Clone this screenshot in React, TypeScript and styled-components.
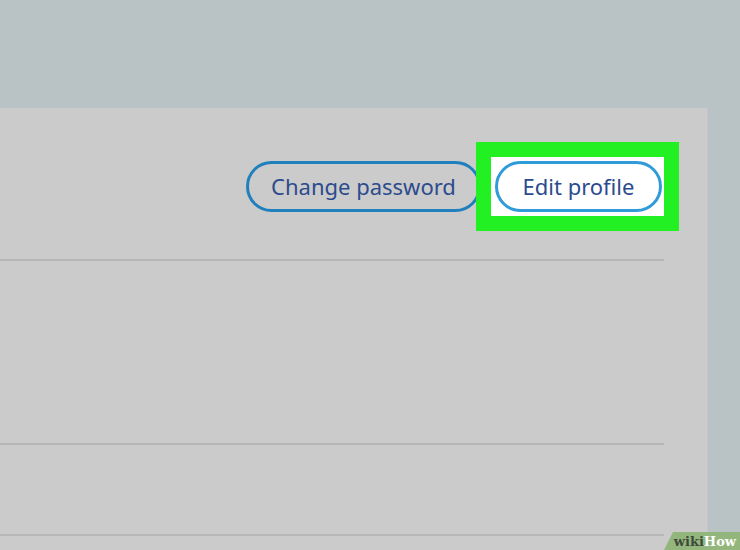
import React from "react";
import styled, { createGlobalStyle } from "styled-components";

const Global = createGlobalStyle`
  html, body { margin: 0; padding: 0; }
  body {
    background: #b9c2c5;
    width: 740px;
    height: 550px;
    overflow: hidden;
    font-family: "Noto Sans", "Open Sans", sans-serif;
  }
`;

const Page = styled.div`
  position: relative;
  width: 740px;
  height: 550px;
  padding-top: 108px;
  box-sizing: border-box;
`;

const Panel = styled.div`
  width: 707px;
  height: 442px;
  background: #cbcbcb;
  border-right: 1px solid #c2c6c7;
  display: flex;
  flex-direction: column;
  overflow: hidden;
`;

const Header = styled.div`
  flex-shrink: 0;
  display: flex;
  justify-content: flex-end;
  align-items: center;
  padding: 34px 28px 28px 0;
`;

const PillButton = styled.button<{ $light?: boolean }>`
  height: 51px;
  box-sizing: border-box;
  border-radius: 26px;
  border: 3px solid ${(p) => (p.$light ? "#2f9bd9" : "#1f80bd")};
  background: ${(p) => (p.$light ? "#ffffff" : "transparent")};
  color: #2b4b8e;
  font-family: "Noto Sans", "Open Sans", sans-serif;
  font-size: 22px;
  padding: 0 0 2px 0;
  display: flex;
  align-items: center;
  justify-content: center;
`;

const ChangeBtn = styled(PillButton)`
  width: 235px;
`;

const EditBtn = styled(PillButton)`
  width: 167px;
`;

const Highlight = styled.div`
  border: 15px solid #22f022;
  background: #ffffff;
  padding: 4px 2px 4px 4px;
  margin-left: -5px;
  display: flex;
`;

const Row = styled.div<{ $h: number }>`
  flex-shrink: 0;
  height: ${(p) => p.$h}px;
  margin-right: 43px;
  border-top: 2px solid #b7b7b7;
  box-sizing: border-box;
`;

const Badge = styled.div`
  position: absolute;
  right: 0;
  bottom: 0;
  width: 76px;
  height: 18px;
  background: #93b67d;
  clip-path: polygon(9px 0, 100% 0, 100% 100%, 0 100%);
  display: flex;
  align-items: center;
  justify-content: flex-end;
  padding-right: 4px;
  box-sizing: border-box;
  font-family: "DejaVu Serif", "Liberation Serif", serif;
  font-weight: bold;
  font-size: 13px;
`;

const Wiki = styled.span`
  color: #3f4a3c;
`;

const How = styled.span`
  color: #ffffff;
`;

export default function App() {
  return (
    <>
      <Global />
      <Page>
        <Panel>
          <Header>
            <ChangeBtn>Change password</ChangeBtn>
            <Highlight>
              <EditBtn $light>Edit profile</EditBtn>
            </Highlight>
          </Header>
          <Row $h={184} />
          <Row $h={91} />
          <Row $h={20} />
        </Panel>
        <Badge>
          <Wiki>wiki</Wiki>
          <How>How</How>
        </Badge>
      </Page>
    </>
  );
}
